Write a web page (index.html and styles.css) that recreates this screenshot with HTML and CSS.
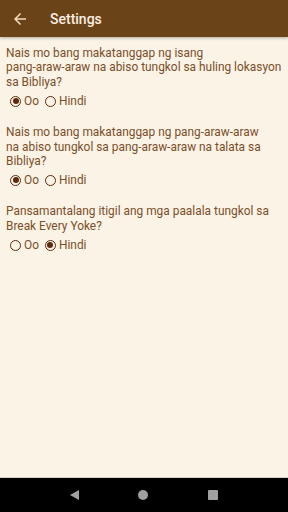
FILE: index.html
```html
<!DOCTYPE html>
<html lang="tl">
<head>
    <meta charset="UTF-8">
    <meta name="viewport" content="width=device-width, initial-scale=1.0">
    <title>Settings</title>
    <link rel="stylesheet" href="styles.css">
</head>
<body>
    <header class="appbar">
        <svg class="back" width="18" height="18" viewBox="0 0 24 24">
            <path d="M20 11H7.83l5.59-5.59L12 4l-8 8 8 8 1.41-1.41L7.83 13H20v-2z" fill="#f3dcc0"/>
        </svg>
        <span class="title">Settings</span>
    </header>

    <main class="content">
        <div class="question">
            <p>Nais mo bang makatanggap ng isang<br>pang-araw-araw na abiso tungkol sa huling lokasyon sa Bibliya?</p>
            <div class="options">
                <label class="radio"><span class="dot checked"></span>Oo</label>
                <label class="radio"><span class="dot"></span>Hindi</label>
            </div>
        </div>

        <div class="question">
            <p>Nais mo bang makatanggap ng pang-araw-araw<br>na abiso tungkol sa pang-araw-araw na talata sa Bibliya?</p>
            <div class="options">
                <label class="radio"><span class="dot checked"></span>Oo</label>
                <label class="radio"><span class="dot"></span>Hindi</label>
            </div>
        </div>

        <div class="question">
            <p>Pansamantalang itigil ang mga paalala tungkol sa Break Every Yoke?</p>
            <div class="options">
                <label class="radio"><span class="dot"></span>Oo</label>
                <label class="radio"><span class="dot checked"></span>Hindi</label>
            </div>
        </div>
    </main>

    <nav class="navbar">
        <span class="nav-back"></span>
        <span class="nav-home"></span>
        <span class="nav-recent"></span>
    </nav>
</body>
</html>
```

FILE: styles.css
```css
body {
    margin: 0;
    padding: 0;
    width: 288px;
    height: 512px;
    font-family: Roboto, 'Liberation Sans', sans-serif;
    background-color: #fcf3e7;
    display: flex;
    flex-direction: column;
    overflow: hidden;
}

.appbar {
    height: 37px;
    background-color: #6b4318;
    display: flex;
    align-items: center;
    box-shadow: 0 1px 3px rgba(0, 0, 0, 0.3);
    flex-shrink: 0;
}

.appbar .back {
    margin-left: 11px;
}

.appbar .title {
    margin-left: 21px;
    color: #fbeee0;
    font-size: 14px;
    font-weight: 500;
}

.content {
    flex: 1;
    padding: 9px 3px 0 6px;
}

.question {
    margin-bottom: 12px;
}

.question p {
    margin: 0;
    font-size: 11.9px;
    line-height: 14.4px;
    color: #7a4f27;
}

.options {
    height: 24px;
    display: flex;
    align-items: center;
    padding-left: 4px;
}

.radio {
    display: flex;
    align-items: center;
    font-size: 11.9px;
    color: #7a4f27;
    margin-right: 6px;
}

.dot {
    width: 9px;
    height: 9px;
    border: 1.5px solid #5e2a0e;
    border-radius: 50%;
    margin-right: 3px;
    position: relative;
}

.dot.checked::after {
    content: '';
    position: absolute;
    left: 1.5px;
    top: 1.5px;
    width: 6px;
    height: 6px;
    border-radius: 50%;
    background-color: #5e2a0e;
}

.navbar {
    height: 34px;
    background-color: #000;
    border-top: 1px solid #d8d0c4;
    display: flex;
    align-items: center;
    justify-content: space-around;
    padding: 0 40px;
    flex-shrink: 0;
}

.nav-back {
    width: 0;
    height: 0;
    border-top: 5px solid transparent;
    border-bottom: 5px solid transparent;
    border-right: 9px solid #a0a0a0;
}

.nav-home {
    width: 10px;
    height: 10px;
    border-radius: 50%;
    background-color: #a0a0a0;
}

.nav-recent {
    width: 10px;
    height: 10px;
    border-radius: 1px;
    background-color: #a0a0a0;
}
```
